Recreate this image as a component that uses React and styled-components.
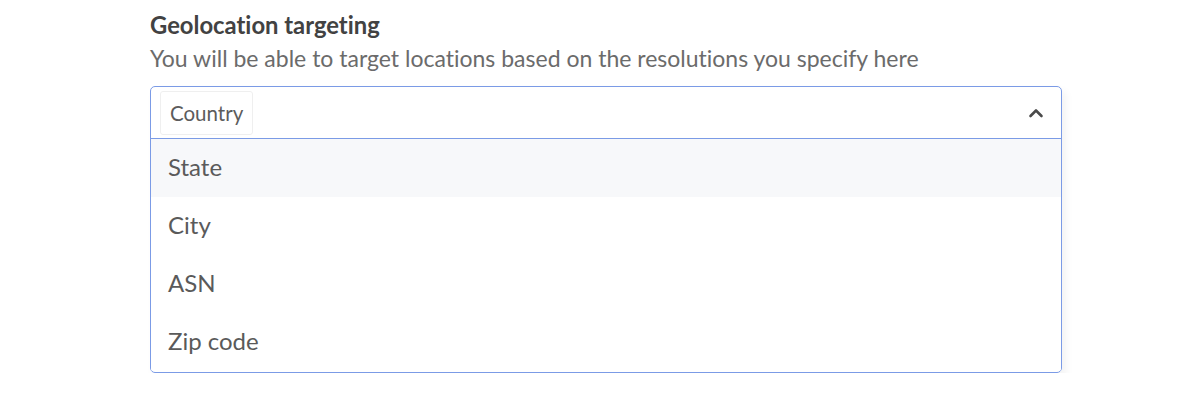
import styled, { createGlobalStyle } from "styled-components";

const GlobalStyle = createGlobalStyle`
  body {
    margin: 0;
    background: #fff;
    font-family: Lato, "Open Sans", sans-serif;
    font-variant-ligatures: none;
  }
`;

const Page = styled.div`
  padding: 11px 0 0 150px;
  width: 912px;
`;

const Title = styled.h3`
  margin: 0;
  font-size: 23.8px;
  line-height: 28px;
  font-weight: 700;
  color: #424242;
`;

const Hint = styled.p`
  margin: 5px 0 14px;
  font-size: 23px;
  line-height: 28px;
  color: #6b6b6b;
`;

const Select = styled.div`
  border: 1.5px solid #7b9be6;
  border-radius: 5px;
  box-shadow: 4px 5px 8px rgba(0, 0, 0, 0.05);
  overflow: hidden;
`;

const Control = styled.div`
  display: flex;
  align-items: center;
  justify-content: space-between;
  height: 51px;
  padding: 0 17px 0 9px;
  border-bottom: 1.5px solid #7b9be6;
`;

const Chip = styled.span`
  display: inline-flex;
  align-items: center;
  height: 42px;
  padding: 0 9px;
  border: 1px solid #efefef;
  border-radius: 3px;
  font-size: 20.5px;
  color: #5c5c5c;
`;

const Menu = styled.ul`
  list-style: none;
  margin: 0;
  padding: 0 0 1px;
`;

const Option = styled.li`
  display: flex;
  align-items: center;
  height: 58px;
  padding: 0 17px 3px;
  box-sizing: border-box;
  font-size: 24px;
  color: #5a5a5a;
  background: ${(props) => (props.focused ? "#f7f8fa" : "#fff")};
`;

const options = ["State", "City", "ASN", "Zip code"];

function App() {
  return (
    <>
      <GlobalStyle />
      <Page>
        <Title>Geolocation targeting</Title>
        <Hint>
          You will be able to target locations based on the resolutions you
          specify here
        </Hint>
        <Select>
          <Control>
            <Chip>Country</Chip>
            <svg width="16" height="12" viewBox="0 0 16 12">
              <path
                d="M2.5 9 L8 3.5 L13.5 9"
                fill="none"
                stroke="#4a4a4a"
                strokeWidth="2.6"
                strokeLinecap="round"
                strokeLinejoin="round"
              />
            </svg>
          </Control>
          <Menu>
            {options.map((opt, i) => (
              <Option key={opt} focused={i === 0}>
                {opt}
              </Option>
            ))}
          </Menu>
        </Select>
      </Page>
    </>
  );
}

export default App;
